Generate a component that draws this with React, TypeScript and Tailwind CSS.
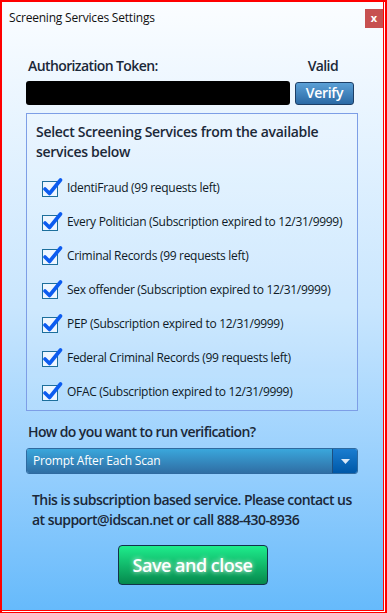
import React from 'react';

const services = [
  'IdentiFraud (99 requests left)',
  'Every Politician (Subscription expired to 12/31/9999)',
  'Criminal Records (99 requests left)',
  'Sex offender (Subscription expired to 12/31/9999)',
  'PEP (Subscription expired to 12/31/9999)',
  'Federal Criminal Records (99 requests left)',
  'OFAC (Subscription expired to 12/31/9999)',
];

function CheckMark() {
  return (
    <svg width="22" height="20" viewBox="0 0 22 20" className="shrink-0">
      <rect x="0.5" y="3.5" width="15" height="15" fill="#eef6ff" stroke="#1d6f9c" strokeWidth="1" />
      <path d="M3 11 L7.5 15.5 L18.5 2" fill="none" stroke="#0d5cf0" strokeWidth="3.6" strokeLinecap="round" strokeLinejoin="round" />
    </svg>
  );
}

export default function App() {
  return (
    <div className="w-[387px] h-[613px] bg-[#ff0000] pl-[2px] pt-[2px] pr-[2px] pb-[1px]" style={{ fontFamily: '"Open Sans", "Noto Sans", sans-serif' }}>
      <div className="h-full border-r border-b border-white">
        <div className="h-full border-r border-b border-[#ff0000] flex flex-col bg-gradient-to-b from-[#fbfdff] via-[#c9e6fe] to-[#66bafb]">
          {/* title bar */}
          <div className="flex items-start justify-between h-[50px]">
            <span className="text-[12px] text-[#111] pl-[7px] pt-[7px] tracking-[-0.2px]">Screening Services Settings</span>
            <div className="w-[18px] h-[19px] mt-[7px] bg-[#c75050] flex items-center justify-center text-white text-[11px] font-bold leading-none pb-[2px]">x</div>
          </div>

          <div className="px-[24px] flex flex-col">
            <div className="flex justify-between items-center text-[14px] font-semibold text-[#1b2838] pl-[2px] pr-[21px] h-[26px] tracking-[-0.6px]">
              <span>Authorization Token:</span>
              <span>Valid</span>
            </div>

            <div className="flex items-center gap-[5px] mt-[3px]">
              <div className="w-[264px] h-[24px] bg-black rounded-[3px]" />
              <button className="w-[59px] h-[23px] rounded-[3px] border border-[#1d3f66] bg-gradient-to-b from-[#5ba0d6] to-[#2b6aa5] text-white text-[14px] font-semibold leading-none tracking-[-0.3px]">Verify</button>
            </div>

            <div className="mt-[8px] border border-[#7d9ee6] w-[332px] h-[298px] pl-[9px] pt-[8px] bg-white/10">
              <p className="text-[14px] font-semibold text-[#1b2838] leading-[20px] tracking-[-0.3px]">
                Select Screening Services from the available services below
              </p>
              <div className="flex flex-col gap-[14px] mt-[16px] pl-[6px]">
                {services.map((s) => (
                  <div key={s} className="flex items-center gap-[3px] h-[20px]">
                    <CheckMark />
                    <span className="text-[12px] text-[#0f1a26] tracking-[-0.3px]">{s}</span>
                  </div>
                ))}
              </div>
            </div>

            <p className="mt-[10px] text-[14px] text-[#1b2838] font-semibold pl-[2px] tracking-[-0.6px]">How do you want to run verification?</p>

            <div className="mt-[6px] w-[332px] h-[26px] flex rounded-[3px] overflow-hidden border border-[#2f6aa0]">
              <div className="flex-1 bg-gradient-to-b from-[#3aa7dc] to-[#2f6ea4] text-white text-[12px] flex items-center pl-[6px] tracking-[-0.2px]">Prompt After Each Scan</div>
              <div className="w-[25px] bg-gradient-to-b from-[#1a7dd0] to-[#0058a8] border-l border-[#1c4f80] flex items-center justify-center">
                <svg width="9" height="5" viewBox="0 0 9 5"><path d="M0 0 H9 L4.5 5 Z" fill="#dce9f7" /></svg>
              </div>
            </div>

            <p className="mt-[16px] text-[14px] font-semibold text-[#1b2838] leading-[20px] pl-[6px] tracking-[-0.55px]">
              This is subscription based service. Please contact us at support@idscan.net or call 888-430-8936
            </p>

            <div className="flex justify-center mt-[15px]">
              <button className="w-[150px] h-[40px] rounded-[4px] border border-[#13324a] bg-gradient-to-b from-[#1eed8c] to-[#06894d] text-white text-[18px] font-semibold tracking-[-0.5px] [text-shadow:0_0_5px_rgba(255,255,255,0.95)]">Save and close</button>
            </div>
          </div>
        </div>
      </div>
    </div>
  );
}
